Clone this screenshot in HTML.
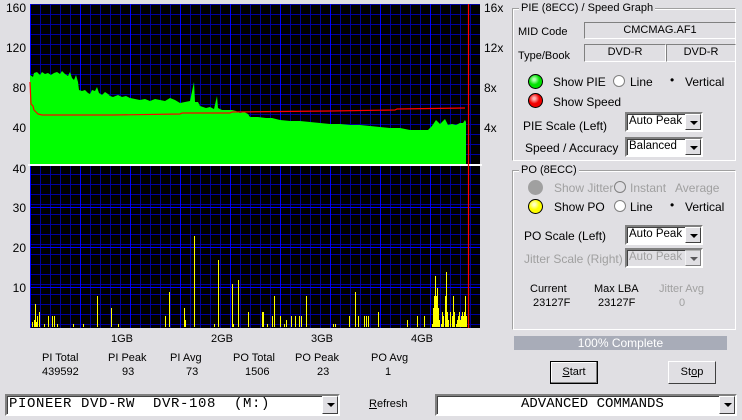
<!DOCTYPE html>
<html><head><meta charset="utf-8"><style>
*{margin:0;padding:0;box-sizing:border-box}
body{width:742px;height:420px;background:#e0dfe3;font-family:"Liberation Sans",sans-serif;font-size:11px;color:#000;position:relative;overflow:hidden}
.a{position:absolute;white-space:nowrap}
.g{position:absolute;border:1px solid;border-color:#a0a0a0 #fff #fff #a0a0a0;box-shadow:1px 1px 0 #fff inset}
.gt{position:absolute;background:#e0dfe3;padding:0 2px;top:-7px;left:6px}
.fld{position:absolute;border:1px solid;border-color:#808080 #fff #fff #808080;text-align:center;line-height:15px}
.sel{position:absolute;background:#fff;border:2px solid;border-color:#808080 #fff #fff #808080;box-shadow:inset 1px 1px 0 #404040;line-height:15px;padding-left:2px;overflow:hidden}
.arr{position:absolute;right:0;top:0;bottom:0;width:16px;background:#e0dfe3;border:1px solid;border-color:#fff #404040 #404040 #fff}
.arr:after{content:"";position:absolute;left:4px;top:6px;border:4px solid transparent;border-top:4px solid #000;border-bottom:0}
.led{position:absolute;width:15px;height:15px;border-radius:50%;border:1.5px solid #000}
.rad{position:absolute;width:12px;height:12px;border-radius:50%;background:#fff;border:1px solid #808080}
.btn{position:absolute;background:#e0dfe3;border:1px solid;border-color:#fff #404040 #404040 #fff;text-align:center;line-height:20px}
.dis{color:#a0a0a0}
</style></head><body>
<svg class="a" style="left:0;top:0" width="510" height="340">
<defs>
<pattern id="gr" x="30" y="4" width="10" height="10" patternUnits="userSpaceOnUse"><path d="M0.5 0V10M0 0.5H10" stroke="#0000a0" stroke-width="1"/></pattern>
<pattern id="gb" x="30" y="0" width="50" height="400" patternUnits="userSpaceOnUse"><path d="M0.5 0V400" stroke="#0000ff" stroke-width="1"/></pattern>
</defs>
<rect x="30" y="4" width="450" height="160" fill="#000"/>
<rect x="30" y="4" width="450" height="160" fill="url(#gr)"/>
<rect x="30" y="4" width="450" height="160" fill="url(#gb)"/>
<rect x="30" y="166" width="450" height="162" fill="#000"/>
<rect x="30" y="166" width="450" height="162" fill="url(#gr)"/>
<rect x="30" y="166" width="450" height="162" fill="url(#gb)"/>
<path d="M30 207.5H480M30 247.5H480M30 287.5H480" stroke="#0000ff"/>
<polygon fill="#00ff00" points="30,164 30,75 33,77 34,73 37,72 40,75 42,72 45,74 48,73 51,75 54,73 57,72 60,74 62,71 65,74 68,76 70,72 72,78 74,80 76,75 78,82 79,90 82,91 85,90 88,93 90,94 92,90 95,91 97,87 99,93 102,95 105,92 108,94 110,96 113,97 118,95 122,97 126,96 130,98 135,99 140,100 145,99 150,101 155,99 160,100 165,101 170,98 175,100 180,103 185,102 190,101 194,82 195,102 198,102 200,106 203,107 206,108 210,107 214,109 217,96 218,108 222,110 228,110 232,110 236,111 240,113 244,112 248,114 250,117 258,117 266,118 272,118 280,120 290,121 300,121 310,122 320,123 330,124 340,124 350,125 360,125 370,126 380,127 390,128 400,128 410,130 420,130 428,130 432,126 436,120 440,124 445,119 448,125 452,124 456,125 460,123 463,123 465,120 466,122 466,164"/>
<polyline fill="none" stroke="#ff0000" stroke-width="1.2" points="30,82 31,104 33,106 34,110 36,112 38,114 42,115 60,115 113,115 180,114 182,113 230,113 232,112 330,111 395,110 397,109 465,108"/>
<rect x="28" y="164" width="454" height="2" fill="#fff"/>
<path d="M468.5 4V328" stroke="#ff0000" stroke-width="1.2"/>
<g stroke="#ffff00" stroke-width="1">
<path d="M32.5 327V322M34.5 327V320M35.5 327V304M36.5 327V322M37.5 327V316M39.5 327V312M44.5 327V324M48.5 327V316M52.5 327V316M54.5 327V316M57.5 327V324M73.5 327V324M83.5 327V324M97.5 327V296M111.5 327V308M118.5 327V324M165.5 327V316M169.5 327V292M184.5 327V308M185.5 327V320M194.5 327V236M214.5 327V324M218.5 327V260M232.5 327V284M233.5 327V324M238.5 327V280M248.5 327V312M262.5 327V312M263.5 327V312M267.5 327V324M272.5 327V316M274.5 327V296M280.5 327V316M284.5 327V324M286.5 327V320M291.5 327V316M295.5 327V316M299.5 327V316M301.5 327V316M306.5 327V296M333.5 327V324M335.5 327V324M349.5 327V316M355.5 327V292M358.5 327V316M364.5 327V316M366.5 327V316M368.5 327V316M378.5 327V312M407.5 327V320M417.5 327V316M424.5 327V316"/>
<path d="M432.5 327V324M433.5 327V308M434.5 327V296M435.5 327V276M436.5 327V296M437.5 327V288M438.5 327V308M439.5 327V320M441.5 327V324M442.5 327V312M443.5 327V316M445.5 327V296M446.5 327V272M447.5 327V312M448.5 327V320M450.5 327V312M452.5 327V316M453.5 327V296M454.5 327V312M456.5 327V324M457.5 327V320M458.5 327V316M459.5 327V312M460.5 327V320M461.5 327V316M462.5 327V312M463.5 327V316M464.5 327V312M465.5 327V296M466.5 327V316"/>
</g>
<g font-family="Liberation Sans" font-size="12" fill="#000" text-anchor="end">
<text x="26" y="12">160</text><text x="26" y="52">120</text><text x="26" y="92">80</text><text x="26" y="132">40</text>
<text x="26" y="173">40</text><text x="26" y="212">30</text><text x="26" y="252">20</text><text x="26" y="292">10</text>
</g>
<g font-family="Liberation Sans" font-size="12" fill="#000">
<text x="484" y="12">16x</text><text x="484" y="52">12x</text><text x="484" y="92">8x</text><text x="484" y="132">4x</text>
</g>
</svg>
<div class="a" style="left:111px;top:333px">1GB</div>
<div class="a" style="left:211px;top:333px">2GB</div>
<div class="a" style="left:311px;top:333px">3GB</div>
<div class="a" style="left:411px;top:333px">4GB</div>
<div class="a" style="left:42px;top:352px">PI Total</div><div class="a" style="left:42px;top:366px">439592</div>
<div class="a" style="left:108px;top:352px">PI Peak</div><div class="a" style="left:122px;top:366px">93</div>
<div class="a" style="left:170px;top:352px">PI Avg</div><div class="a" style="left:186px;top:366px">73</div>
<div class="a" style="left:233px;top:352px">PO Total</div><div class="a" style="left:245px;top:366px">1506</div>
<div class="a" style="left:295px;top:352px">PO Peak</div><div class="a" style="left:317px;top:366px">23</div>
<div class="a" style="left:371px;top:352px">PO Avg</div><div class="a" style="left:385px;top:366px">1</div>

<div class="sel" style="left:5px;top:394px;width:335px;height:22px;font-family:'Liberation Mono',monospace;font-size:14px;line-height:17px;letter-spacing:0.6px">PIONEER DVD-RW&nbsp; DVR-108&nbsp; (M:)<div class="arr"></div></div>
<div class="a" style="left:369px;top:398px"><u>R</u>efresh</div>
<div class="sel" style="left:435px;top:394px;width:302px;height:22px;font-family:'Liberation Mono',monospace;font-size:14px;line-height:17px;padding-left:84px">ADVANCED COMMANDS<div class="arr"></div></div>

<div class="g" style="left:512px;top:8px;width:224px;height:153px"><div class="gt">PIE (8ECC) / Speed Graph</div></div>
<div class="a" style="left:518px;top:26px">MID Code</div>
<div class="fld" style="left:584px;top:22px;width:152px;height:17px">CMCMAG.AF1</div>
<div class="a" style="left:518px;top:50px">Type/Book</div>
<div class="fld" style="left:584px;top:44px;width:82px;height:18px">DVD-R</div>
<div class="fld" style="left:666px;top:44px;width:70px;height:18px">DVD-R</div>
<div class="led" style="left:528px;top:74px;background:radial-gradient(circle at 40% 35%,#afffaf 10%,#00e000 45%)"></div>
<div class="a" style="left:553px;top:75px;font-size:12px">Show PIE</div>
<div class="rad" style="left:613px;top:75px"></div><div class="a" style="left:630px;top:75px;font-size:12px">Line</div>
<div class="a" style="left:670px;top:73px;font-size:12px">•</div><div class="a" style="left:685px;top:75px;font-size:12px">Vertical</div>
<div class="led" style="left:528px;top:93px;background:radial-gradient(circle at 40% 35%,#ffb0b0 10%,#f00000 45%)"></div>
<div class="a" style="left:553px;top:95px;font-size:12px">Show Speed</div>
<div class="a" style="left:523px;top:119px;font-size:12px">PIE Scale (Left)</div>
<div class="sel" style="left:625px;top:112px;width:78px;height:20px;font-size:11.5px">Auto Peak<div class="arr"></div></div>
<div class="a" style="left:525px;top:141px;font-size:12px">Speed / Accuracy</div>
<div class="sel" style="left:625px;top:137px;width:78px;height:20px;font-size:11.5px">Balanced<div class="arr"></div></div>

<div class="g" style="left:512px;top:170px;width:224px;height:160px"><div class="gt">PO (8ECC)</div></div>
<div class="led" style="left:528px;top:180px;background:#a0a0a0;border-color:#a0a0a0"></div>
<div class="a dis" style="left:554px;top:181px;font-size:12px">Show Jitter</div>
<div class="rad" style="left:614px;top:181px;background:#e0dfe3"></div><div class="a dis" style="left:630px;top:181px;font-size:12px">Instant</div>
<div class="a dis" style="left:675px;top:181px;font-size:12px">Average</div>
<div class="led" style="left:528px;top:199px;background:radial-gradient(circle at 40% 35%,#ffffc0 10%,#ffff00 45%)"></div>
<div class="a" style="left:554px;top:200px;font-size:12px">Show PO</div>
<div class="rad" style="left:614px;top:200px"></div><div class="a" style="left:630px;top:200px;font-size:12px">Line</div>
<div class="a" style="left:670px;top:198px;font-size:12px">•</div><div class="a" style="left:685px;top:200px;font-size:12px">Vertical</div>
<div class="a" style="left:524px;top:229px;font-size:12px">PO Scale (Left)</div>
<div class="sel" style="left:625px;top:225px;width:78px;height:20px;font-size:11.5px">Auto Peak<div class="arr"></div></div>
<div class="a dis" style="left:524px;top:252px;font-size:12px">Jitter Scale (Right)</div>
<div class="sel" style="left:625px;top:248px;width:78px;height:20px;font-size:11.5px;background:#e0dfe3;color:#a0a0a0">Auto Peak<div class="arr" style="opacity:.6"></div></div>
<div class="a" style="left:530px;top:283px">Current</div><div class="a" style="left:533px;top:297px">23127F</div>
<div class="a" style="left:594px;top:283px">Max LBA</div><div class="a" style="left:598px;top:297px">23127F</div>
<div class="a dis" style="left:659px;top:283px">Jitter Avg</div><div class="a dis" style="left:679px;top:297px">0</div>

<div class="a" style="left:514px;top:336px;width:213px;height:14px;background:#a8acb8;color:#fff;text-align:center;line-height:14px;font-size:12px">100% Complete</div>
<div class="btn" style="left:550px;top:361px;width:48px;height:23px;border:1px solid #000;box-shadow:inset -1px -1px 0 #808080,inset 1px 1px 0 #fff"><u>S</u>tart</div>
<div class="btn" style="left:668px;top:361px;width:48px;height:23px">St<u>o</u>p</div>
</body></html>
